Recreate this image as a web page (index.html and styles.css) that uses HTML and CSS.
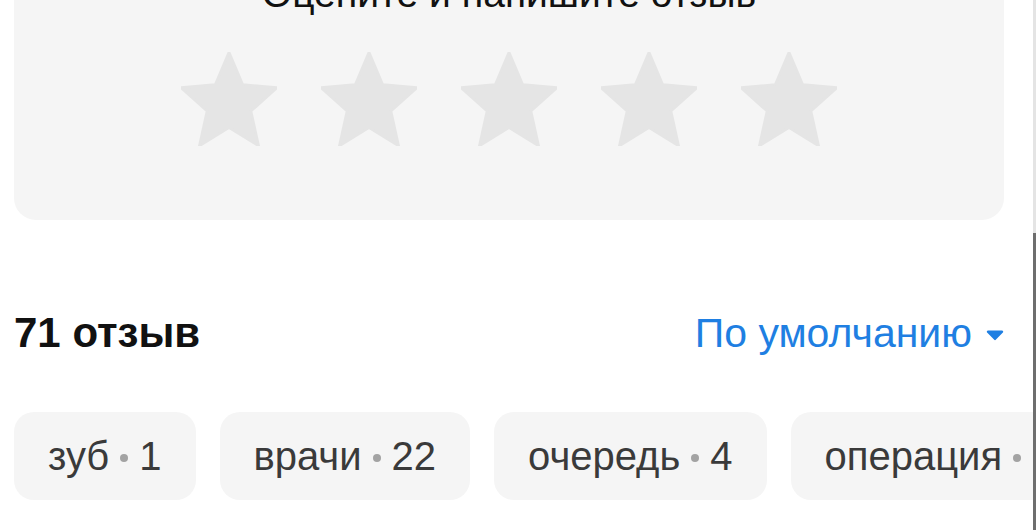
FILE: index.html
```
<!DOCTYPE html>
<html lang="ru">
<head>
    <meta charset="UTF-8">
    <meta name="viewport" content="width=device-width, initial-scale=1.0">
    <title>Отзывы</title>
    <link rel="stylesheet" href="styles.css">
</head>
<body>
    <div class="page">
        <div class="content">
            <div class="rate-card">
                <div class="rate-title">Оцените и напишите отзыв</div>
                <div class="stars">
                    <svg class="star" viewBox="2.4 2.6 19.2 18.05" preserveAspectRatio="none"><path d="M12 2.6l2.75 6.25 6.85.6-5.2 4.5 1.55 6.7L12 17.1l-5.95 3.55 1.55-6.7-5.2-4.5 6.85-.6z"/></svg>
                    <svg class="star" viewBox="2.4 2.6 19.2 18.05" preserveAspectRatio="none"><path d="M12 2.6l2.75 6.25 6.85.6-5.2 4.5 1.55 6.7L12 17.1l-5.95 3.55 1.55-6.7-5.2-4.5 6.85-.6z"/></svg>
                    <svg class="star" viewBox="2.4 2.6 19.2 18.05" preserveAspectRatio="none"><path d="M12 2.6l2.75 6.25 6.85.6-5.2 4.5 1.55 6.7L12 17.1l-5.95 3.55 1.55-6.7-5.2-4.5 6.85-.6z"/></svg>
                    <svg class="star" viewBox="2.4 2.6 19.2 18.05" preserveAspectRatio="none"><path d="M12 2.6l2.75 6.25 6.85.6-5.2 4.5 1.55 6.7L12 17.1l-5.95 3.55 1.55-6.7-5.2-4.5 6.85-.6z"/></svg>
                    <svg class="star" viewBox="2.4 2.6 19.2 18.05" preserveAspectRatio="none"><path d="M12 2.6l2.75 6.25 6.85.6-5.2 4.5 1.55 6.7L12 17.1l-5.95 3.55 1.55-6.7-5.2-4.5 6.85-.6z"/></svg>
                </div>
            </div>

            <div class="reviews-head">
                <div class="reviews-count">71 отзыв</div>
                <div class="sort">
                    По умолчанию
                    <svg class="sort-arrow" viewBox="0 0 18 12"><path d="M2 1.5h14a1.2 1.2 0 0 1 .9 2L10 10.6a1.3 1.3 0 0 1-2 0L1.1 3.5a1.2 1.2 0 0 1 .9-2z"/></svg>
                </div>
            </div>

            <div class="tags">
                <div class="tag">зуб<span class="dot"></span>1</div>
                <div class="tag">врачи<span class="dot"></span>22</div>
                <div class="tag">очередь<span class="dot"></span>4</div>
                <div class="tag">операция<span class="dot"></span>1</div>
                <div class="tag">персонал<span class="dot"></span>9</div>
            </div>
        </div>
        <div class="edge"></div>
    </div>
</body>
</html>
```

FILE: styles.css
```
body {
    margin: 0;
    padding: 0;
    background: #fff;
    font-family: 'Liberation Sans', Arial, sans-serif;
    overflow: hidden;
}

.page {
    display: flex;
    height: 530px;
}

.content {
    flex: 1;
    min-width: 0;
    padding-left: 14px;
    overflow: hidden;
}

.edge {
    width: 3px;
    background: linear-gradient(#e4e4e4 0, #e4e4e4 233px, #6e6e6e 233px);
}

/* карточка с оценкой */
.rate-card {
    margin: -30px 29px 0 0;
    padding: 0 0 74px;
    background: #f5f5f5;
    border-radius: 22px;
}

.rate-title {
    font-size: 39px;
    line-height: 48px;
    text-align: center;
    color: #111;
}

.stars {
    display: flex;
    justify-content: center;
    gap: 44px;
    margin-top: 34px;
}

.star {
    width: 96px;
    height: 94px;
    display: block;
}

.star path {
    fill: #e5e5e5;
    stroke: #e5e5e5;
    stroke-width: 0.5;
    stroke-linejoin: round;
}

/* заголовок отзывов */
.reviews-head {
    display: flex;
    justify-content: space-between;
    align-items: center;
    margin: 88px 29px 0 0;
    height: 50px;
}

.reviews-count {
    font-size: 42px;
    font-weight: bold;
    color: #111;
}

.sort {
    display: flex;
    align-items: center;
    gap: 14px;
    font-size: 41px;
    color: #1f7fe2;
}

.sort-arrow {
    width: 18px;
    height: 12px;
    fill: #1f7fe2;
    margin-top: 4px;
}

/* теги */
.tags {
    display: flex;
    gap: 24px;
    margin-top: 54px;
}

.tag {
    flex-shrink: 0;
    display: flex;
    align-items: center;
    height: 88px;
    padding: 0 34px;
    background: #f5f5f5;
    border-radius: 20px;
    font-size: 40px;
    color: #3a3a3a;
}

.dot {
    width: 8px;
    height: 8px;
    border-radius: 50%;
    background: #a3a3a3;
    margin: 4px 11px 0;
}
```
